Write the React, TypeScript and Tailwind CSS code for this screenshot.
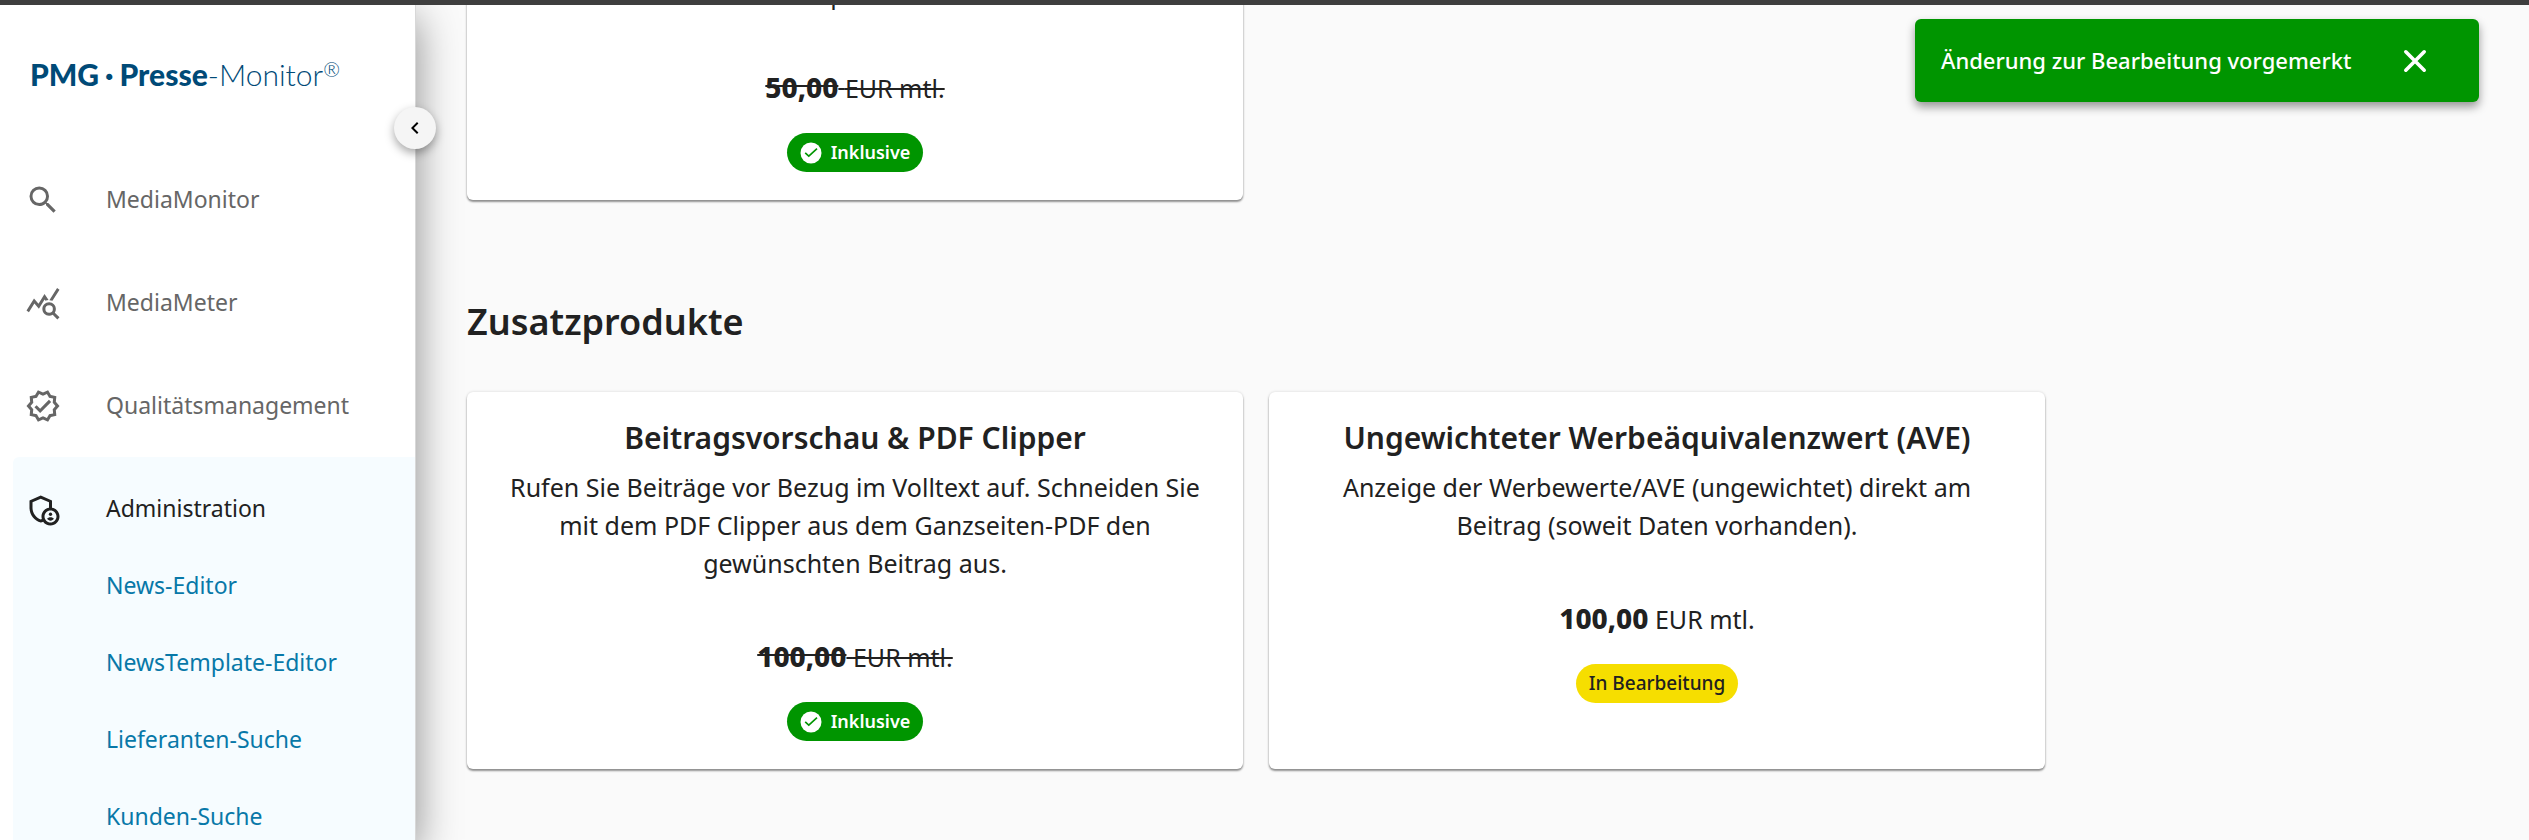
import type { ReactNode } from "react";
import {
  MdChevronLeft,
  MdOutlineAdminPanelSettings,
  MdOutlineQueryStats,
  MdOutlineVerified,
  MdSearch,
} from "react-icons/md";

type NavItemProps = {
  icon: ReactNode;
  label: string;
  active?: boolean;
  links?: string[];
};

function NavItem({ icon, label, active, links = [] }: NavItemProps) {
  return (
    <li
      className={
        active
          ? "ml-[13px] grow rounded-l-md bg-[#f6fcff] py-[13px] text-[#212121]"
          : "ml-[13px] py-[13px] text-[#666666]"
      }
    >
      <a href="#" className="flex h-[77px] items-center">
        <span className="w-[93px] pl-[12px] text-[36px]">{icon}</span>
        {label}
      </a>
      {links.length > 0 && (
        <ul>
          {links.map((link) => (
            <li key={link}>
              <a
                href="#"
                className="flex h-[77px] items-center pl-[93px] text-[#0878a8]"
              >
                {link}
              </a>
            </li>
          ))}
        </ul>
      )}
    </li>
  );
}

function Sidebar() {
  return (
    <aside className="relative z-10 flex w-[416px] shrink-0 flex-col border-r border-[#d8d8d8] bg-white shadow-[0_13px_40px_rgba(0,0,0,0.45)]">
      <a
        href="#"
        className="flex h-[143px] shrink-0 items-center pb-[4px] pl-[30px] font-[Lato,sans-serif] text-[30px] text-[#004a77]"
      >
        <span className="font-black">
          PMG<span className="mx-[6px]">·</span>Presse
        </span>
        <span className="font-light">-Monitor</span>
        <span className="pb-3 text-[20px] font-light">®</span>
      </a>
      <button
        type="button"
        aria-label="Menü einklappen"
        className="absolute top-[102px] right-[-21px] flex size-[42px] items-center justify-center rounded-full bg-[#f5f5f5] text-[24px] text-black shadow-[0_4px_10px_rgba(0,0,0,0.35)]"
      >
        <MdChevronLeft />
      </button>
      <nav className="flex grow flex-col">
        <ul className="flex grow flex-col text-[23px]">
          <NavItem icon={<MdSearch />} label="MediaMonitor" />
          <NavItem icon={<MdOutlineQueryStats />} label="MediaMeter" />
          <NavItem icon={<MdOutlineVerified />} label="Qualitätsmanagement" />
          <NavItem
            icon={<MdOutlineAdminPanelSettings />}
            label="Administration"
            active
            links={[
              "News-Editor",
              "NewsTemplate-Editor",
              "Lieferanten-Suche",
              "Kunden-Suche",
            ]}
          />
        </ul>
      </nav>
    </aside>
  );
}

function CheckIcon() {
  return (
    <svg viewBox="0 0 26 26" className="size-[26px]" fill="none">
      <circle cx="13" cy="13" r="10.5" fill="white" />
      <path d="M7.2 12.8l3.6 3.4 8.2-7.6" stroke="#009500" strokeWidth="1.6" />
    </svg>
  );
}

function CloseIcon() {
  return (
    <svg
      viewBox="0 0 36 36"
      className="size-[36px]"
      fill="none"
      stroke="currentColor"
      strokeWidth="3.6"
      strokeLinecap="round"
    >
      <path d="M8.8 8.8l18.4 18.4M27.2 8.8L8.8 27.2" />
    </svg>
  );
}

type ProductCardProps = {
  title?: string;
  description: string;
  price: string;
  included?: boolean;
};

function ProductCard({ title, description, price, included }: ProductCardProps) {
  return (
    <article className="flex w-[776px] flex-col items-center rounded-md bg-white px-[26px] pt-[25px] pb-[28px] text-center shadow-[0_2px_2px_rgba(0,0,0,0.4),0_0_3px_rgba(0,0,0,0.15)]">
      {title && (
        <h3 className="mb-[9px] text-[30px] leading-[42px] font-semibold">
          {title}
        </h3>
      )}
      <p className="max-w-[710px] text-[25px] leading-[38px]">{description}</p>
      <p
        className={
          included
            ? "mt-[56px] text-[25px] leading-[38px] line-through"
            : "mt-[56px] text-[25px] leading-[38px]"
        }
      >
        <strong className="text-[28px] leading-[30px] font-extrabold">
          {price}
        </strong>{" "}
        EUR mtl.
      </p>
      {included ? (
        <span className="mt-[26px] flex h-[39px] items-center gap-[7px] rounded-full bg-[#009500] pr-[13px] pl-[11px] text-[18px] font-semibold text-white">
          <CheckIcon />
          Inklusive
        </span>
      ) : (
        <span className="mt-[26px] flex h-[39px] items-center rounded-full bg-[#f6de00] px-[13px] text-[19px] font-medium">
          In Bearbeitung
        </span>
      )}
    </article>
  );
}

function Toast() {
  return (
    <div
      role="status"
      className="absolute top-[19px] right-[50px] z-20 flex h-[83px] w-[564px] items-center rounded-md bg-[#009500] pl-[26px] text-[22px] font-medium text-white shadow-[0_5px_10px_rgba(0,0,0,0.4)]"
    >
      <span className="w-[456px] shrink-0">
        Änderung zur Bearbeitung vorgemerkt
      </span>
      <button type="button" aria-label="Schließen">
        <CloseIcon />
      </button>
    </div>
  );
}

export default function App() {
  return (
    <div className="relative flex h-screen flex-col overflow-hidden bg-[#fafafa] font-['Noto_Sans',sans-serif] text-[#212121]">
      <div className="z-30 h-[5px] shrink-0 bg-[#3e3e3e]"></div>
      <div className="flex min-h-0 grow">
        <Sidebar />
        <main className="flex grow flex-col justify-end overflow-hidden pb-[71px] pl-[51px]">
          <div className="flex">
            <ProductCard description="Update" price="50,00" included />
          </div>
          <h2 className="mt-[95px] mb-[43px] text-[36px] leading-[54px] font-semibold">
            Zusatzprodukte
          </h2>
          <div className="flex gap-[26px]">
            <ProductCard
              title="Beitragsvorschau & PDF Clipper"
              description="Rufen Sie Beiträge vor Bezug im Volltext auf. Schneiden Sie mit dem PDF Clipper aus dem Ganzseiten-PDF den gewünschten Beitrag aus."
              price="100,00"
              included
            />
            <ProductCard
              title="Ungewichteter Werbeäquivalenzwert (AVE)"
              description="Anzeige der Werbewerte/AVE (ungewichtet) direkt am Beitrag (soweit Daten vorhanden)."
              price="100,00"
            />
          </div>
        </main>
      </div>
      <Toast />
    </div>
  );
}
